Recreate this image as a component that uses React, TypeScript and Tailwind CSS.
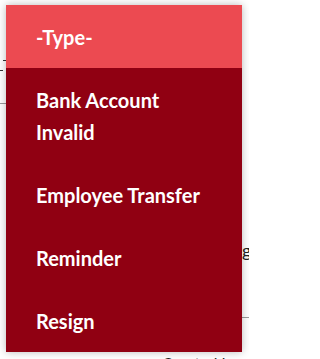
import React from "react";

const items = ["Bank Account Invalid", "Employee Transfer", "Reminder", "Resign"];

export default function App() {
  return (
    <div
      className="relative w-[249px] h-[359px] overflow-hidden bg-white"
      style={{ fontFamily: "Lato, 'Noto Sans', sans-serif" }}
    >
      {/* underlying page fragments */}
      <div className="absolute left-[3px] top-[60px] w-[3px] h-px bg-[#333]" />
      <div className="absolute left-0 top-[70px] w-[3px] h-px bg-[#333]" />
      <div className="absolute left-0 top-[103px] w-[8px] h-px bg-[#9a9a9a]" />
      <div className="absolute left-[240px] top-[317px] w-[9px] h-px bg-[#9a9a9a]" />
      <div className="absolute left-[242px] top-[238px] text-[18px] text-[#222] leading-[24px]">g</div>
      <div className="absolute left-[162px] top-[353px] text-[16px] text-[#222] leading-[20px] whitespace-nowrap">
        Created by
      </div>

      {/* dropdown */}
      <ul className="absolute left-[6px] top-[5px] w-[236px] m-0 p-0 list-none flex flex-col shadow-[0_0_8px_rgba(0,0,0,0.28)] text-white font-bold text-[20px] leading-[32px]">
        <li className="bg-[#ec4a51] pl-[30px] pr-[30px] py-[15.5px]">-Type-</li>
        {items.map((t) => (
          <li key={t} className="bg-[#900012] pl-[30px] pr-[30px] py-[15.5px]">
            {t}
          </li>
        ))}
      </ul>
    </div>
  );
}
